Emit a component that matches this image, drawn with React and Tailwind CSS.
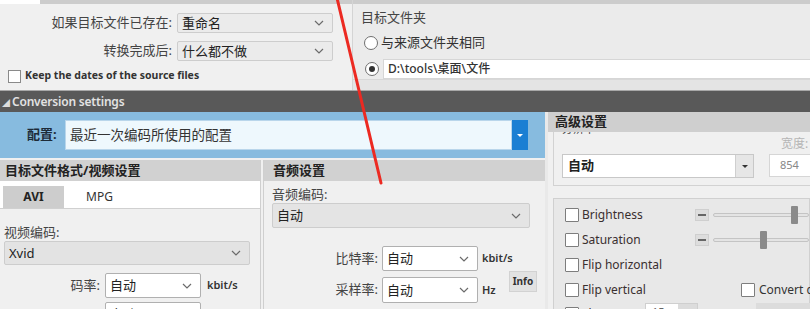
const font = "font-['Noto_Sans','Noto_Sans_CJK_SC',sans-serif]";

function Chevron() {
  return (
    <svg width="10" height="6" viewBox="0 0 10 6" className="shrink-0">
      <polyline points="1,1 5,5 9,1" fill="none" stroke="#6b6b6b" strokeWidth="1.2" />
    </svg>
  );
}

function Select({ value, className = '', bold = false }) {
  return (
    <div className={`flex shrink-0 items-center justify-between border rounded-[2px] pl-[4px] pr-[8px] ${className}`}>
      <span className={`text-[13px] text-[#222] leading-none ${bold ? 'font-bold' : ''}`}>{value}</span>
      <Chevron />
    </div>
  );
}

function Check({ className = '' }) {
  return <span className={`block w-[14px] h-[14px] shrink-0 border border-[#7d7d7d] bg-white rounded-[1px] ${className}`} />;
}

function Radio({ on = false }) {
  return (
    <span className="w-[14px] h-[14px] shrink-0 rounded-full border border-[#6f6f6f] bg-white flex items-center justify-center">
      {on && <span className="w-[6px] h-[6px] rounded-full bg-[#333]" />}
    </span>
  );
}

function SliderRow({ label, thumb }) {
  return (
    <div className="flex items-center h-[25px]">
      <Check />
      <span className="ml-[3px] w-[113px] shrink-0 text-[12px] text-[#3a2f2f]">{label}</span>
      <span className="w-[14px] h-[12px] shrink-0 bg-[#dddddd] border border-[#cfcfcf] flex items-center justify-center">
        <span className="w-[8px] h-[2px] bg-[#666]" />
      </span>
      <div className="relative ml-[4px] flex-1 h-[18px] flex items-center">
        <div className="w-full h-[4px] bg-[#e4e4e4] border border-[#c4c4c4] rounded-[2px]" />
        <div className="absolute top-0 w-[7px] h-[18px] bg-[#8a8a8a] rounded-[1px]" style={{ left: thumb }} />
      </div>
    </div>
  );
}

export default function App() {
  return (
    <div className={`relative w-[810px] h-[309px] overflow-hidden bg-[#f0f0f0] ${font}`}>
      {/* top: output options */}
      <div className="flex h-[91px] border-b border-[#a8a8a8]">
        <div className="w-[352px] shrink-0 flex flex-col bg-[#f0f0f0]">
          <div className="flex h-[4px] shrink-0">
            <div className="w-[40px] bg-white" />
            <div className="flex-1 bg-[#cccccc]" />
          </div>
          <div className="flex items-center mt-[9px] h-[20px]">
            <span className="w-[172px] text-right text-[13px] text-[#444]">如果目标文件已存在:</span>
            <Select value="重命名" className="ml-[5px] w-[156px] h-[20px] bg-[#ebebeb] border-[#cdcdcd]" />
          </div>
          <div className="flex items-center mt-[8px] h-[20px]">
            <span className="w-[172px] text-right text-[13px] text-[#444]">转换完成后:</span>
            <Select value="什么都不做" className="ml-[5px] w-[156px] h-[20px] bg-[#ebebeb] border-[#cdcdcd]" />
          </div>
          <div className="flex items-center mt-[8px] ml-[8px] h-[14px]">
            <span className="w-[13px] h-[13px] border border-[#8a8a8a] bg-white" />
            <span className="ml-[4px] text-[10.5px] font-bold text-[#333]">Keep the dates of the source files</span>
          </div>
        </div>
        <div className="flex-1 flex flex-col border-l border-[#d4d4d4] bg-[#ebebeb]">
          <div className="h-[4px] shrink-0 bg-[#cccccc]" />
          <span className="ml-[8px] mt-[5px] text-[13px] leading-[16px] text-[#444]">目标文件夹</span>
          <div className="flex items-center mt-[10px] ml-[11px] h-[16px]">
            <Radio />
            <span className="ml-[3px] text-[13px] text-[#333]">与来源文件夹相同</span>
          </div>
          <div className="flex items-center mt-[8px] h-[20px]">
            <span className="ml-[12px]"><Radio on /></span>
            <div className="ml-[4px] flex-1 h-[20px] bg-white border-y border-l border-[#d6d6d6] flex items-center pl-[4px] text-[12px] font-medium text-[#333]">
              D:\tools\桌面\文件
            </div>
          </div>
          <div className="flex-1 bg-[#e4e4e4] border-t border-[#d8d8d8]" />
        </div>
      </div>

      {/* section bar */}
      <div className="h-[21px] bg-[#595959] flex items-center pl-[2px]">
        <span className="text-[8px] text-[#dcdcdc] leading-none mt-[2px]">◢</span>
        <span className="ml-[2px] text-[12px] font-semibold text-[#e2e2e2] tracking-[-0.2px]">Conversion settings</span>
      </div>

      <div className="flex h-[197px]">
        {/* left column */}
        <div className="w-[545px] shrink-0 flex flex-col">
          <div className="h-[46px] shrink-0 bg-[#87bbdf] flex items-center">
            <span className="ml-[27px] w-[36px] text-[13px] font-bold text-[#1d2b38]">配置:</span>
            <div className="ml-[2px] w-[447px] h-[30px] bg-[#eef8fd] border border-[#b9d6eb] flex items-center pl-[4px] text-[13.5px] text-[#333]">
              最近一次编码所使用的配置
            </div>
            <div className="w-[16px] h-[30px] bg-[#1b7fd3] flex items-center justify-center">
              <span className="w-0 h-0 border-x-[3px] border-x-transparent border-t-[3px] border-t-white" />
            </div>
          </div>
          <div className="flex flex-1 min-h-0 mt-[2px]">
            {/* video */}
            <div className="w-[261px] shrink-0 flex flex-col border-r border-[#cfcfcf]">
              <div className="h-[21px] shrink-0 bg-[#d1d1d1] flex items-center pl-[5px] text-[13px] font-bold text-[#222]">目标文件格式/视频设置</div>
              <div className="h-[28px] shrink-0 bg-white border-b border-[#d0d0d0] flex items-end">
                <div className="ml-[3px] w-[61px] h-[22px] bg-[#cdcdcd] flex items-center justify-center text-[12px] font-bold text-[#222]">AVI</div>
                <div className="ml-[22px] h-[22px] flex items-center text-[12px] text-[#333]">MPG</div>
              </div>
              <div className="flex flex-col pl-[4px]">
                <span className="mt-[14px] text-[13px] leading-[18px] text-[#444]">视频编码:</span>
                <Select value="Xvid" className="w-[246px] h-[24px] bg-[#e3e3e3] border-[#cdcdcd]" />
                <div className="flex items-center mt-[8px]">
                  <span className="w-[96px] text-right text-[13px] text-[#444]">码率:</span>
                  <Select value="自动" className="ml-[5px] w-[96px] h-[25px] bg-white border-[#b0b0b0]" />
                  <span className="ml-[6px] text-[11px] font-semibold text-[#333]">kbit/s</span>
                </div>
                <Select value="自动" className="ml-[101px] mt-[4px] w-[96px] h-[25px] bg-white border-[#b0b0b0]" />
              </div>
            </div>
            {/* audio */}
            <div className="flex-1 flex flex-col ml-[2px] border-l border-[#cfcfcf]">
              <div className="h-[21px] shrink-0 bg-[#d1d1d1] flex items-center pl-[9px] text-[13px] font-bold text-[#222]">音频设置</div>
              <div className="flex flex-col pl-[8px]">
                <span className="mt-[4px] text-[13px] leading-[18px] text-[#444]">音频编码:</span>
                <Select value="自动" className="w-[258px] h-[25px] bg-[#e4e4e4] border-[#cdcdcd]" />
              </div>
              <div className="flex mt-[18px]">
                <div className="w-[245px] shrink-0 flex flex-col gap-[6px]">
                  <div className="flex items-center">
                    <span className="w-[114px] text-right text-[13px] text-[#444]">比特率:</span>
                    <Select value="自动" className="ml-[4px] w-[96px] h-[25px] bg-white border-[#b0b0b0]" />
                    <span className="ml-[4px] w-[27px] whitespace-nowrap text-[11px] font-semibold text-[#333]">kbit/s</span>
                  </div>
                  <div className="flex items-center">
                    <span className="w-[114px] text-right text-[13px] text-[#444]">采样率:</span>
                    <Select value="自动" className="ml-[4px] w-[96px] h-[26px] bg-white border-[#b0b0b0]" />
                    <span className="ml-[4px] text-[11px] font-semibold text-[#333]">Hz</span>
                  </div>
                  <Select value="自动" className="ml-[118px] w-[96px] h-[25px] bg-white border-[#b0b0b0]" />
                </div>
                <div className="mt-[25px] w-[28px] h-[21px] bg-[#e2e2e2] border border-[#d2d2d2] flex items-center justify-center text-[10px] font-bold text-[#333]">Info</div>
              </div>
            </div>
          </div>
        </div>

        {/* advanced */}
        <div className="flex-1 min-w-0 overflow-hidden flex flex-col border-l-[3px] border-[#e9e9e9]">
          <div className="h-[20px] shrink-0 bg-[#cfcfcf] flex items-center pl-[7px] text-[13px] font-bold text-[#222]">高级设置</div>
          <div className="flex flex-col pl-[5px]">
            <div className="border-l border-b border-[#d2d2d2] pl-[8px] pb-[7px] bg-[#f0f0f0]">
              <div className="flex">
                <div className="w-[192px] shrink-0">
                  <div className="h-[5px] overflow-hidden">
                    <div className="-mt-[10px] text-[11px] leading-[14px] text-[#444]">分辨率</div>
                  </div>
                  <div className="mt-[17px] h-[24px] flex border border-[#c8c8c8] bg-white">
                    <span className="flex-1 flex items-center pl-[5px] text-[13px] font-bold text-[#222]">自动</span>
                    <span className="w-[18px] bg-[#e6e6e6] border-l border-[#cfcfcf] flex items-center justify-center">
                      <span className="w-0 h-0 border-x-[3px] border-x-transparent border-t-[3px] border-t-[#333]" />
                    </span>
                  </div>
                </div>
                <div className="ml-[15px] mt-[5px] shrink-0 flex flex-col">
                  <span className="pl-[12px] h-[17px] text-[12px] leading-[14px] text-[#b5b5b5]">宽度:</span>
                  <div className="w-[60px] h-[23px] border border-[#d6d6d6] bg-white flex items-center pl-[10px] text-[11px] text-[#888]">854</div>
                </div>
              </div>
            </div>
            <div className="mt-[12px] border border-[#d0d0d0] bg-[#e8e8e8] pl-[11px] pt-[3px] pb-[20px]">
              <SliderRow label="Brightness" thumb={78} />
              <SliderRow label="Saturation" thumb={47} />
              <div className="flex items-center h-[25px]">
                <Check />
                <span className="ml-[3px] text-[12px] text-[#3a2f2f]">Flip horizontal</span>
              </div>
              <div className="flex items-center h-[25px]">
                <Check />
                <span className="ml-[3px] w-[159px] shrink-0 text-[12px] text-[#3a2f2f]">Flip vertical</span>
                <Check />
                <span className="ml-[4px] text-[12px] text-[#333] whitespace-nowrap">Convert colors</span>
              </div>
              <div className="flex items-start h-[25px] pt-[5px]">
                <Check />
                <span className="ml-[3px] w-[63px] shrink-0 text-[12px] leading-[14px] text-[#3a2f2f]">Sharpen</span>
                <div className="flex shrink-0 h-[22px] -mt-[4px] border border-[#cfcfcf]">
                  <span className="w-[32px] bg-white text-[11px] text-[#666] pl-[6px]">15</span>
                  <span className="w-[19px] bg-[#dcdcdc]" />
                </div>
                <div className="ml-[58px] -mt-[4px] w-[60px] shrink-0 h-[22px] bg-[#dcdcdc]" />
              </div>
            </div>
          </div>
        </div>
      </div>

      {/* red annotation line */}
      <svg className="absolute inset-0 pointer-events-none" width="810" height="309">
        <line x1="337" y1="-2" x2="381" y2="183" stroke="#ec2a22" strokeWidth="3" strokeLinecap="round" />
      </svg>
    </div>
  );
}
